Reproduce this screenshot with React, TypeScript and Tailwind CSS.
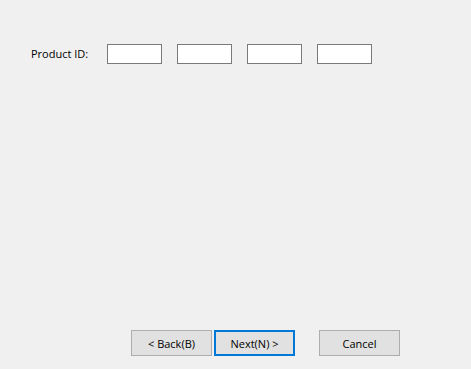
import React from "react";

export default function App() {
  const font = { fontFamily: '"Segoe UI", "Open Sans", "Noto Sans", sans-serif' };
  return (
    <div
      className="w-[471px] h-[369px] bg-[#f0f0f0] flex flex-col text-[11px] text-black"
      style={font}
    >
      <div className="flex items-center pt-[44px] pl-[31px]">
        <div className="w-[76px] pt-[1px]">Product ID:</div>
        <div className="flex gap-[15px]">
          <input className="w-[55px] h-[20px] border border-[#7a7a7a] bg-white outline-none" />
          <input className="w-[55px] h-[20px] border border-[#7a7a7a] bg-white outline-none" />
          <input className="w-[55px] h-[20px] border border-[#7a7a7a] bg-white outline-none" />
          <input className="w-[55px] h-[20px] border border-[#7a7a7a] bg-white outline-none" />
        </div>
      </div>
      <div className="flex-1" />
      <div className="flex pl-[131px] pb-[13px]">
        <button className="w-[81px] h-[26px] border border-[#adadad] bg-[#e1e1e1] pt-[3px]">&lt; Back(B)</button>
        <button className="ml-[2px] w-[81px] h-[26px] border-2 border-[#0078d7] bg-[#e1e1e1] pt-[3px]">Next(N) &gt;</button>
        <button className="ml-[24px] w-[81px] h-[26px] border border-[#adadad] bg-[#e1e1e1] pt-[3px]">Cancel</button>
      </div>
    </div>
  );
}
